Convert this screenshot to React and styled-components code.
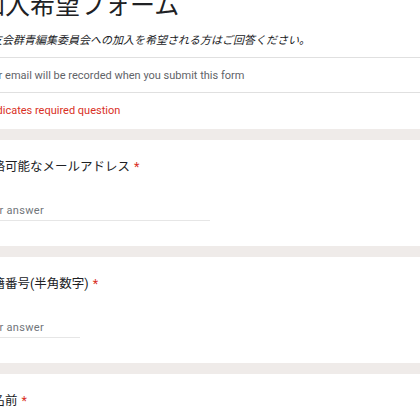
import React from "react";
import styled, { createGlobalStyle } from "styled-components";

const GlobalStyle = createGlobalStyle`
  html, body {
    margin: 0;
    padding: 0;
    background: #efebe9;
  }
  body {
    font-family: Roboto, "Noto Sans CJK JP", sans-serif;
    color: #202124;
  }
`;

const Viewport = styled.div`
  width: 420px;
  height: 420px;
  overflow: hidden;
  background: #efebe9;
`;

const Sheet = styled.div`
  margin-left: -20px;
  display: flex;
  flex-direction: column;
  gap: 11px;
`;

const Card = styled.div`
  background: #ffffff;
  display: flex;
  flex-direction: column;
  height: ${(p) => p.$height}px;
`;

const Title = styled.h1`
  margin: -7px 0 0;
  font-size: 25px;
  line-height: 25px;
  font-weight: 400;
  color: #202124;
`;

const Description = styled.p`
  margin: 15px 0 0;
  font-size: 11px;
  line-height: 16px;
  font-style: italic;
  color: #202124;
`;

const InfoRow = styled.div`
  display: flex;
  align-items: center;
  height: 34px;
  border-top: 1px solid #e0e0e0;
  margin-top: ${(p) => p.$top || 0}px;
  font-size: 11px;
  letter-spacing: 0;
  color: ${(p) => (p.$danger ? "#d93025" : "#5f6368")};
`;

const Question = styled.div`
  margin-top: 20px;
  font-size: 12.5px;
  line-height: 14px;
  color: #202124;
`;

const Required = styled.span`
  color: #d93025;
  margin-left: 4px;
`;

const Answer = styled.div`
  margin-top: 26px;
  width: ${(p) => p.$width}px;
  height: 20px;
  display: flex;
  align-items: center;
  border-bottom: 1px solid #e6e6e6;
  font-size: 11px;
  letter-spacing: 0.3px;
  color: #70757a;
`;

const questions = [
  { label: "連絡可能なメールアドレス", width: 230 },
  { label: "学籍番号(半角数字)", width: 100 },
  { label: "お名前", width: 230 },
];

export default function App() {
  return (
    <Viewport>
      <GlobalStyle />
      <Sheet>
        <Card $height={129}>
          <Title>加入希望フォーム</Title>
          <Description>
            当支会群青編集委員会への加入を希望される方はご回答ください。
          </Description>
          <InfoRow $top={8}>Your email will be recorded when you submit this form</InfoRow>
          <InfoRow $danger>* Indicates required question</InfoRow>
        </Card>
        {questions.map((q) => (
          <Card key={q.label} $height={106}>
            <Question>
              {q.label}
              <Required>*</Required>
            </Question>
            <Answer $width={q.width}>Your answer</Answer>
          </Card>
        ))}
      </Sheet>
    </Viewport>
  );
}
